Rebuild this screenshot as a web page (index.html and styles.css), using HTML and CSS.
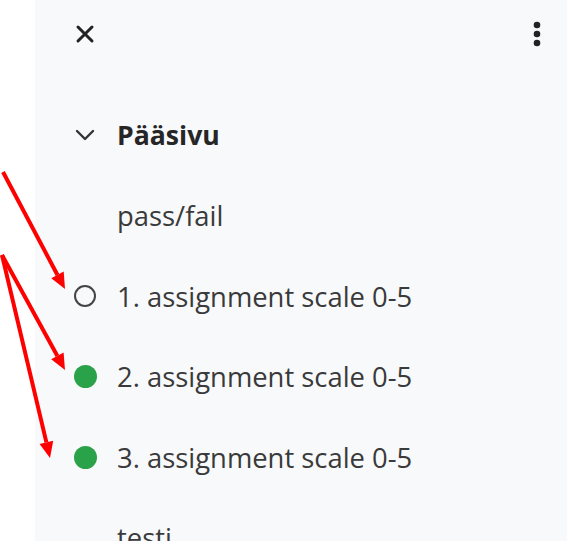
FILE: index.html
```html
<!DOCTYPE html>
<html lang="fi">
<head>
<meta charset="utf-8">
<title>Pääsivu</title>
<link rel="stylesheet" href="styles.css">
</head>
<body>
<div class="page">
  <div class="gutter"></div>
  <aside class="panel">
    <header class="panel-header">
      <button class="icon-btn close" aria-label="Close">
        <svg width="20" height="20" viewBox="0 0 20 20"><path d="M3 3 L17 17 M17 3 L3 17" stroke="#222" stroke-width="3" stroke-linecap="round" fill="none"/></svg>
      </button>
      <button class="icon-btn more" aria-label="More">
        <svg width="8" height="26" viewBox="0 0 8 26"><circle cx="4" cy="4" r="3.3" fill="#222"/><circle cx="4" cy="13" r="3.3" fill="#222"/><circle cx="4" cy="22" r="3.3" fill="#222"/></svg>
      </button>
    </header>
    <ul class="tree">
      <li class="row heading">
        <span class="marker">
          <svg width="20" height="12" viewBox="0 0 20 12"><path d="M2 2 L10 10 L18 2" stroke="#333" stroke-width="2.4" fill="none" stroke-linecap="round" stroke-linejoin="round"/></svg>
        </span>
        <span class="label">Pääsivu</span>
      </li>
      <li class="row"><span class="marker"></span><span class="label">pass/fail</span></li>
      <li class="row"><span class="marker"><span class="dot open"></span></span><span class="label">1. assignment scale 0-5</span></li>
      <li class="row"><span class="marker"><span class="dot done"></span></span><span class="label">2. assignment scale 0-5</span></li>
      <li class="row"><span class="marker"><span class="dot done"></span></span><span class="label">3. assignment scale 0-5</span></li>
      <li class="row"><span class="marker"></span><span class="label">testi</span></li>
    </ul>
  </aside>
  <svg class="annotations" width="567" height="541" viewBox="0 0 567 541">
    <g stroke="#ff0000" stroke-width="4" stroke-linecap="butt" fill="none">
      <line x1="3" y1="172" x2="57.5" y2="275"/>
      <line x1="2" y1="255" x2="57.4" y2="356"/>
      <line x1="2" y1="255" x2="46.4" y2="442.4"/>
    </g>
    <g fill="#ff0000">
      <polygon points="65,289 51.3,278.2 63.7,271.6"/>
      <polygon points="65,370 51.2,359.2 63.6,352.6"/>
      <polygon points="50,458 39.6,444 53.2,440.8"/>
    </g>
  </svg>
</div>
</body>
</html>
```

FILE: styles.css
```css
html, body {
  margin: 0;
  padding: 0;
  background: #ffffff;
}
body {
  font-family: "Open Sans", "Noto Sans", "Liberation Sans", sans-serif;
  color: #3a3a3a;
}
.page {
  position: relative;
  display: flex;
  width: 567px;
  height: 541px;
  overflow: hidden;
}
.gutter {
  width: 35px;
  flex: none;
  background: #ffffff;
}
.panel {
  flex: 1;
  background: #f8f9fb;
  display: flex;
  flex-direction: column;
  min-height: 0;
}
.panel-header {
  flex: none;
  height: 68px;
  display: flex;
  align-items: center;
  justify-content: space-between;
  padding: 0 26px 0 40px;
}
.icon-btn {
  border: 0;
  background: none;
  padding: 0;
  display: flex;
  align-items: center;
  justify-content: center;
}
.close {
  width: 20px;
  height: 20px;
}
.more {
  width: 8px;
  height: 26px;
}
.tree {
  flex: none;
  list-style: none;
  margin: 0;
  padding: 27px 0 0 38px;
}
.row {
  height: 80.5px;
  display: flex;
  align-items: center;
  gap: 20px;
  font-size: 27.4px;
}
.marker {
  width: 24px;
  height: 24px;
  flex: none;
  display: flex;
  align-items: center;
  justify-content: center;
}
.heading .label {
  font-weight: 700;
  color: #262626;
  font-size: 26.6px;
}
.dot {
  width: 23px;
  height: 23px;
  border-radius: 50%;
  box-sizing: border-box;
}
.dot.open {
  width: 22px;
  height: 22px;
  border: 2.4px solid #444;
}
.dot.done {
  background: #2aa24a;
}
.annotations {
  position: absolute;
  left: 0;
  top: 0;
  pointer-events: none;
}
```
